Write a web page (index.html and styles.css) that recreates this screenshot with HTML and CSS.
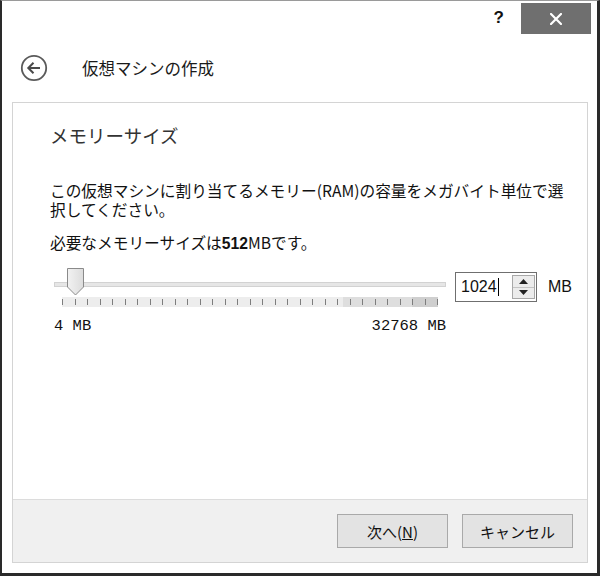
FILE: index.html
```html
<!DOCTYPE html>
<html lang="ja">
<head>
<meta charset="utf-8">
<title>仮想マシンの作成</title>
<link rel="stylesheet" href="styles.css">
</head>
<body>
<div class="window">
  <div class="titlebar">
    <span class="help">?</span>
    <button class="close" aria-label="閉じる">
      <svg width="12" height="12" viewBox="0 0 12 12"><path d="M1 1L11 11M11 1L1 11" stroke="#fff" stroke-width="2.2" stroke-linecap="square"/></svg>
    </button>
  </div>
  <div class="header">
    <svg class="back" width="28" height="28" viewBox="0 0 28 28">
      <circle cx="14" cy="14" r="12.2" fill="none" stroke="#5a5a5a" stroke-width="1.8"/>
      <path d="M20 14H8.5M13.5 8.8L8.3 14l5.2 5.2" fill="none" stroke="#4a4a4a" stroke-width="2"/>
    </svg>
    <span class="wtitle">仮想マシンの作成</span>
  </div>
  <div class="panel">
    <div class="content">
      <h1 class="heading">メモリーサイズ</h1>
      <p class="desc">この仮想マシンに割り当てるメモリー(RAM)の容量をメガバイト単位で選<br>択してください。</p>
      <p class="rec">必要なメモリーサイズは<b>512</b>MBです。</p>
      <div class="slider-row">
        <div class="slider">
          <div class="track-area">
            <div class="track"></div>
            <svg class="thumb" width="17" height="28" viewBox="0 0 17 28">
              <defs>
                <linearGradient id="tg" x1="0" y1="0" x2="1" y2="0">
                  <stop offset="0" stop-color="#f2f2f2"/>
                  <stop offset="1" stop-color="#dcdcdc"/>
                </linearGradient>
              </defs>
              <polygon points="0.5,0.5 16.5,0.5 16.5,19 8.5,27 0.5,19" fill="url(#tg)" stroke="#8a8a8a"/>
            </svg>
          </div>
          <div class="ticks">
            <i></i><i></i><i></i><i></i><i></i><i></i><i></i><i></i><i></i><i></i><i></i><i></i><i></i><i></i><i></i><i></i><i></i><i></i><i></i><i></i><i></i><i></i><i></i><i></i><i></i><i></i><i></i><i></i><i></i><i></i><i></i>
          </div>
          <div class="range-labels"><span>4 MB</span><span>32768 MB</span></div>
        </div>
        <div class="spin">
          <span class="spin-value">1024<span class="caret"></span></span>
          <span class="spin-btns">
            <span class="spin-up"><svg width="9" height="5" viewBox="0 0 9 5"><path d="M4.5 0L9 5H0z" fill="#222"/></svg></span>
            <span class="spin-down"><svg width="9" height="5" viewBox="0 0 9 5"><path d="M0 0H9L4.5 5z" fill="#222"/></svg></span>
          </span>
        </div>
        <span class="unit">MB</span>
      </div>
    </div>
    <div class="footer">
      <button class="btn">次へ(<u>N</u>)</button>
      <button class="btn">キャンセル</button>
    </div>
  </div>
</div>
</body>
</html>
```

FILE: styles.css
```css
* { box-sizing: border-box; }
html, body { margin: 0; padding: 0; background: #fff; }
body {
  font-family: "Noto Sans CJK JP", "Liberation Sans", sans-serif;
  color: #111;
}
.window {
  width: 600px;
  height: 576px;
  border-top: 1px solid #9a9a9a;
  border-left: 2px solid #2a2a2a;
  border-right: 3px solid #2a2a2a;
  border-bottom: 3px solid #2a2a2a;
  background: #fff;
  display: flex;
  flex-direction: column;
}
.titlebar {
  height: 34px;
  display: flex;
  justify-content: flex-end;
  align-items: flex-start;
  padding-top: 2px;
  padding-right: 6px;
}
.help {
  font-family: "Liberation Sans", sans-serif;
  font-weight: bold;
  font-size: 17px;
  line-height: 30px;
  margin-right: 17px;
  color: #111;
}
.close {
  width: 70px;
  height: 31px;
  border: none;
  background: #6f6f6f;
  display: flex;
  align-items: center;
  justify-content: center;
  padding: 0;
}
.header {
  height: 67px;
  display: flex;
  align-items: center;
  padding-left: 18px;
  padding-bottom: 2px;
}
.back { margin-right: 34px; }
.wtitle {
  font-size: 16.5px;
  color: #1a1a1a;
}
.panel {
  flex: 1;
  margin: 0 9px 10px 10px;
  border: 1px solid #d4d4d4;
  display: flex;
  flex-direction: column;
}
.content {
  flex: 1;
  padding: 20px 4px 0 37px;
}
.heading {
  margin: 0;
  font-weight: normal;
  font-size: 18.5px;
  line-height: 24px;
  color: #333;
}
.desc {
  margin: 34px 0 0;
  font-size: 15.7px;
  line-height: 19px;
  white-space: nowrap;
}
.rec {
  margin: 14px 0 0;
  font-size: 15.7px;
  line-height: 19px;
}
.rec b { font-family: "Liberation Sans", sans-serif; font-weight: bold; }
.slider-row {
  margin-top: 15px;
  display: flex;
  align-items: flex-start;
}
.slider {
  width: 392px;
  flex: none;
  margin-left: 4px;
}
.track-area {
  position: relative;
  height: 29px;
  display: flex;
  align-items: center;
  padding-top: 1px;
}
.track {
  width: 100%;
  height: 5px;
  background: #e6e6e6;
  border: 1px solid #d2d2d2;
  margin-top: 2px;
}
.thumb {
  position: absolute;
  left: 13px;
  top: 0;
}
.ticks {
  margin: 0 8px 0 8px;
  height: 10px;
  display: flex;
  justify-content: space-between;
  align-items: flex-start;
  background: linear-gradient(to right, #ededed 0, #ededed 281px, #dedede 281px, #dedede 350px, #cfcfcf 350px);
}
.ticks i {
  width: 1px;
  height: 6px;
  margin-top: 2px;
  background: #7d7d7d;
}
.range-labels {
  display: flex;
  justify-content: space-between;
  margin-top: 9px;
  font-family: "Liberation Mono", monospace;
  font-size: 15.5px;
  line-height: 20px;
  color: #111;
}
.spin {
  flex: none;
  margin-left: 9px;
  margin-top: 4px;
  width: 82px;
  height: 30px;
  border: 1px solid #6f6f6f;
  display: flex;
  align-items: center;
  justify-content: space-between;
  padding: 0 1px 0 5px;
}
.spin-value {
  font-family: "Liberation Sans", sans-serif;
  font-size: 16px;
  display: flex;
  align-items: center;
}
.caret {
  display: inline-block;
  width: 1px;
  height: 18px;
  background: #000;
  margin-left: 1px;
}
.spin-btns {
  display: flex;
  flex-direction: column;
  width: 23px;
  height: 24px;
  border: 1px solid #a8a8a8;
}
.spin-up, .spin-down {
  flex: 1;
  display: flex;
  align-items: center;
  justify-content: center;
  background: #ececec;
}
.spin-up { border-bottom: 1px solid #c4c4c4; }
.unit {
  flex: none;
  margin-left: 11px;
  margin-top: 9px;
  font-family: "Liberation Sans", sans-serif;
  font-size: 16px;
  line-height: 20px;
}
.footer {
  height: 63px;
  background: #f0f0f0;
  border-top: 1px solid #dcdcdc;
  display: flex;
  justify-content: flex-end;
  align-items: center;
  gap: 14px;
  padding-right: 14px;
}
.btn {
  width: 111px;
  height: 34px;
  border: 1px solid #a9a9a9;
  background: #e3e3e3;
  font-family: "Noto Sans CJK JP", sans-serif;
  font-size: 15px;
  color: #111;
  padding: 0;
}
```
